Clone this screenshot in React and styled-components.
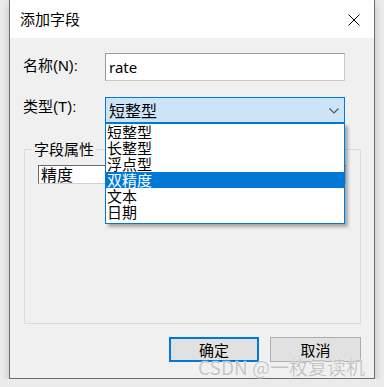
import React from "react";
import styled, { createGlobalStyle } from "styled-components";

const GlobalStyle = createGlobalStyle`
  html, body {
    margin: 0;
    padding: 0;
    background: #ebebeb;
  }
  body {
    font-family: "Noto Sans CJK SC", "Noto Sans", sans-serif;
    color: #000;
  }
`;

const Dialog = styled.div`
  position: relative;
  margin-left: 9px;
  width: 366px;
  height: 379px;
  box-sizing: border-box;
  border: 1px solid #6d6d6d;
  border-top-width: 0;
  background: #f0f0f0;
  box-shadow: 0 3px 8px rgba(0, 0, 0, 0.18);
  display: flex;
  flex-direction: column;
`;

const TitleBar = styled.div`
  height: 38px;
  flex: none;
  background: #fff;
  display: flex;
  align-items: center;
  justify-content: space-between;
  padding: 0 14px 0 10px;
  font-size: 15px;
  line-height: 20px;
`;

const CloseIcon = styled.svg`
  width: 12px;
  height: 12px;
  margin-top: 2px;
`;

const Body = styled.div`
  flex: 1;
  display: flex;
  flex-direction: column;
  padding: 15px 13px 16px 14px;
`;

const FieldRow = styled.div`
  display: flex;
  align-items: center;
  margin-top: ${(p) => p.$gap || 0}px;
`;

const Label = styled.label`
  width: 82px;
  flex: none;
  font-family: "Liberation Sans", "Noto Sans CJK SC", sans-serif;
  font-size: 15px;
  line-height: 20px;
  margin-left: -1px;
  margin-top: ${(p) => p.$shift || 0}px;
`;

const TextInput = styled.div`
  width: 240px;
  height: 28px;
  box-sizing: border-box;
  border: 1px solid #7a7a7a;
  border-color: #9a9a9a #c8c8c8 #c8c8c8 #9a9a9a;
  background: #fff;
  padding: 0 3px;
  font-family: "Noto Sans", sans-serif;
  font-size: 15px;
  line-height: 26px;
`;

const SelectWrap = styled.div`
  position: relative;
  width: 240px;
`;

const SelectBox = styled.div`
  height: 26px;
  box-sizing: border-box;
  border: 1px solid #0078d7;
  background: #cce4f7;
  display: flex;
  align-items: center;
  justify-content: space-between;
  padding: 0 5px 0 3px;
  font-size: 16px;
`;

const Chevron = styled.svg`
  width: 10px;
  height: 6px;
  margin-top: 2px;
`;

const OptionList = styled.div`
  position: absolute;
  top: 100%;
  left: 0;
  width: 240px;
  box-sizing: border-box;
  border: 1px solid #0078d7;
  background: #fff;
  padding-bottom: 3px;
  box-shadow: 3px 3px 3px rgba(0, 0, 0, 0.3);
  z-index: 2;
`;

const Option = styled.div`
  height: 16px;
  line-height: 16px;
  font-size: 15px;
  padding-left: 1px;
  white-space: nowrap;
  background: ${(p) => (p.$active ? "#0078d7" : "transparent")};
  color: ${(p) => (p.$active ? "#fff" : "#000")};
`;

const GroupBox = styled.fieldset`
  flex: 1;
  margin: 16px 0 0 0;
  padding: 6px 14px 0 0;
  border: 1px solid #dcdcdc;
  min-width: 0;
`;

const Legend = styled.legend`
  margin-left: 7px;
  padding: 0 2px;
  font-size: 15px;
  line-height: 20px;
`;

const PropBox = styled.div`
  margin-left: 13px;
  height: 19px;
  box-sizing: border-box;
  border: 1px solid #7a7a7a;
  border-color: #6a6a6a #d0d0d0 #d0d0d0 #6a6a6a;
  background: #fff;
  padding-left: 2px;
  font-size: 16px;
  line-height: 17px;
`;

const ButtonRow = styled.div`
  display: flex;
  justify-content: flex-end;
  gap: 11px;
  margin-top: 13px;
`;

const Button = styled.button`
  width: ${(p) => (p.$primary ? 90 : 91)}px;
  height: 25px;
  box-sizing: border-box;
  border: ${(p) => (p.$primary ? "2px solid #0078d7" : "1px solid #adadad")};
  background: #e1e1e1;
  font-family: "Noto Sans CJK SC", sans-serif;
  font-size: 15px;
  line-height: 20px;
  padding: 0;
  color: #000;
`;

const Watermark = styled.div`
  position: absolute;
  left: 188px;
  top: 356px;
  font-size: 19px;
  line-height: 22px;
  color: #c4c4c4;
  text-shadow: 0 0 1px #fff, 0 0 1px #fff;
  white-space: nowrap;
  z-index: 3;
  pointer-events: none;
`;

const options = ["短整型", "长整型", "浮点型", "双精度", "文本", "日期"];

export default function App() {
  return (
    <>
      <GlobalStyle />
      <Dialog>
        <TitleBar>
          <span>添加字段</span>
          <CloseIcon viewBox="0 0 12 12">
            <path d="M0.5 0.5 L11.5 11.5 M11.5 0.5 L0.5 11.5" stroke="#000" strokeWidth="1" fill="none" />
          </CloseIcon>
        </TitleBar>
        <Body>
          <FieldRow>
            <Label $shift={-3}>名称(N):</Label>
            <TextInput>rate</TextInput>
          </FieldRow>
          <FieldRow $gap={16}>
            <Label $shift={-6}>类型(T):</Label>
            <SelectWrap>
              <SelectBox>
                <span>短整型</span>
                <Chevron viewBox="0 0 10 6">
                  <polyline points="0.5,0.5 5,5 9.5,0.5" stroke="#555" strokeWidth="1.2" fill="none" />
                </Chevron>
              </SelectBox>
              <OptionList>
                {options.map((o) => (
                  <Option key={o} $active={o === "双精度"}>{o}</Option>
                ))}
              </OptionList>
            </SelectWrap>
          </FieldRow>
          <GroupBox>
            <Legend>字段属性</Legend>
            <PropBox>精度</PropBox>
          </GroupBox>
          <ButtonRow>
            <Button $primary>确定</Button>
            <Button>取消</Button>
          </ButtonRow>
        </Body>
        <Watermark>CSDN @一枚复读机</Watermark>
      </Dialog>
    </>
  );
}
